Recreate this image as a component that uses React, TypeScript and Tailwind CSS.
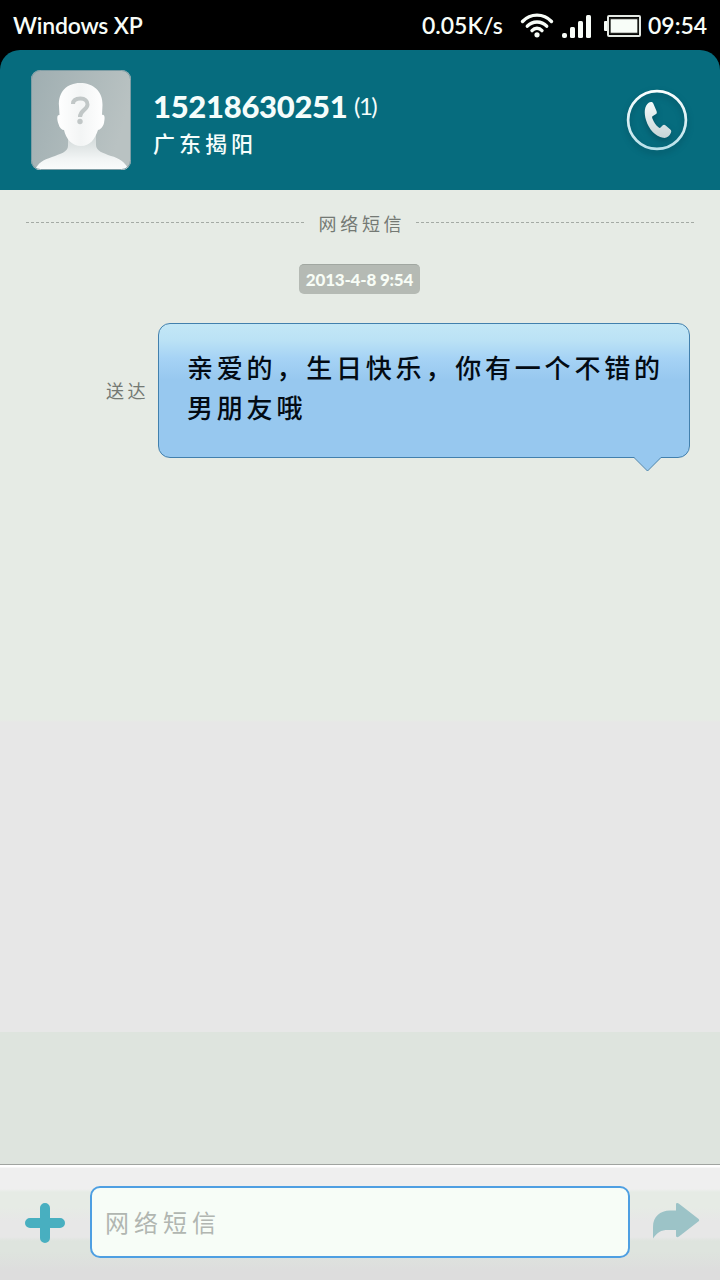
import type { ReactNode } from "react";

type Message = {
  id: number;
  lines: string[];
  status: string;
};

const messages: Message[] = [
  {
    id: 1,
    lines: ["亲爱的，生日快乐，你有一个不错的", "男朋友哦"],
    status: "送达",
  },
];

function WifiIcon() {
  return (
    <svg width="34" height="26" viewBox="0 0 34 26" fill="none" stroke="#f8fdf8" strokeWidth="3.4" strokeLinecap="round">
      <path d="M2.5 9.5C10.500 1 23.500 1 31.500 9.500" />
      <path d="M7.300 14.200C12.500 8.500 21.500 8.500 26.700 14.200" />
      <path d="M12 18.600C14.800 15.500 19.200 15.500 22 18.600" />
      <circle cx="17" cy="22.800" r="2.600" fill="#f8fdf8" stroke="none" />
    </svg>
  );
}

function SignalIcon() {
  return (
    <svg width="30" height="24" viewBox="0 0 30 24" fill="#f8fdf8">
      <rect x="0" y="18" width="5" height="5" rx="2" />
      <rect x="8" y="12" width="5" height="11" rx="1.500" />
      <rect x="16" y="6" width="5" height="17" rx="1.500" />
      <rect x="24" y="0" width="5" height="23" rx="1.500" />
    </svg>
  );
}

function BatteryIcon() {
  return (
    <svg width="37" height="22" viewBox="0 0 37 22">
      <rect x="0" y="6" width="5" height="10" rx="1" fill="#f8fdf8" />
      <rect x="4" y="1" width="32" height="20" rx="1" fill="none" stroke="#e4e9e4" strokeWidth="2" />
      <rect x="6" y="3.500" width="28" height="15" rx="1" fill="#f8fdf8" />
      <rect x="6" y="3.500" width="28" height="15" rx="1" fill="none" stroke="#20221f" strokeWidth="1.400" />
    </svg>
  );
}

function Avatar() {
  return (
    <svg className="block" width="100" height="100" viewBox="0 0 100 100">
      <defs>
        <linearGradient id="avatarBg" x1="0" y1="0" x2="1" y2="0.300">
          <stop offset="0" stopColor="#9faeb1" />
          <stop offset="1" stopColor="#b9c2c2" />
        </linearGradient>
        <linearGradient id="avatarBody" x1="0" y1="0" x2="0" y2="1">
          <stop offset="0" stopColor="#cdd5d5" />
          <stop offset="0.700" stopColor="#f2f5f5" />
          <stop offset="1" stopColor="#fafcfc" />
        </linearGradient>
        <linearGradient id="avatarFace" x1="0" y1="0" x2="1" y2="0">
          <stop offset="0" stopColor="#ffffff" />
          <stop offset="0.500" stopColor="#f3f5f5" />
          <stop offset="1" stopColor="#ffffff" />
        </linearGradient>
        <clipPath id="avatarClip">
          <rect width="100" height="100" rx="9" />
        </clipPath>
      </defs>
      <g clipPath="url(#avatarClip)">
        <rect width="100" height="100" fill="url(#avatarBg)" />
        <path d="M37 64V76C37 82 29 84 21 87C12 90 7 93 4 100H98C94 92 88 88 80 86C72 83 65 81 65 75V64Z" fill="url(#avatarBody)" />
        <path
          d="M49 13C36 13 27 22 28 36L28.500 45C25.500 44.500 26 50 27.500 54C28.500 58 31 60 33 60C35 69 41 76 50 76C59 76 64 69 67 60C69 60 72 57 73 53C74 48 74 44 71 45L71.500 35C72 21 62 13 49 13Z"
          fill="url(#avatarFace)"
        />
        <path d="M42 34C42 30 45 28.500 49.500 28.500C54 28.500 56.500 31 56.500 34.500C56.500 40 49 40 49 47" fill="none" stroke="#c1c7c7" strokeWidth="4" />
        <circle cx="49" cy="51.500" r="2.700" fill="#c1c7c7" />
      </g>
      <rect x="0.500" y="0.500" width="99" height="99" rx="9" fill="none" stroke="#7d9da5" />
    </svg>
  );
}

function CallIcon() {
  return (
    <svg className="drop-shadow-[0_3px_3px_rgba(0,40,55,0.35)]" width="62" height="62" viewBox="0 0 62 62">
      <defs>
        <linearGradient id="ring" x1="0" y1="0" x2="0" y2="1">
          <stop offset="0" stopColor="#fafefe" />
          <stop offset="1" stopColor="#b9e1ea" />
        </linearGradient>
        <linearGradient id="handset" x1="0" y1="0" x2="0" y2="1">
          <stop offset="0" stopColor="#f5fbfb" />
          <stop offset="1" stopColor="#c7d5d7" />
        </linearGradient>
      </defs>
      <circle cx="31" cy="31" r="28.900" fill="none" stroke="url(#ring)" strokeWidth="2.700" />
      <path
        d="M23 13.500C24.500 12.600 26.500 12.800 27.300 14.500L30.500 22C31 23.500 31 24.500 29.700 25.300L26.500 27.300C25.800 28 26.200 29 26.600 30C28 33.500 30 36.300 32.500 38.300C33.300 39 34 39.200 34.800 38.300L36.500 36.600C37.500 35.600 38.500 35.700 39.700 36.400L44.300 40.500C45.500 41.600 45.500 42.600 44.800 44C43.500 47.500 40.500 49.400 37 48.800C29.500 47.500 22.800 40.500 20 31C18 24 18 17 23 13.500Z"
        fill="url(#handset)"
      />
    </svg>
  );
}

function PlusIcon() {
  return (
    <svg width="40" height="40" viewBox="0 0 40 40" stroke="#48afc0" strokeWidth="10" strokeLinecap="round">
      <path d="M20 5V35M5 20H35" />
    </svg>
  );
}

function SendIcon() {
  return (
    <svg width="47" height="36" viewBox="0 0 47 36">
      <path
        d="M0 35.500V24C0 13.500 7 7.800 17 7.500H23V1.500C23 0 24.500 -0.300 26 0.700L45.300 15.700C46.500 16.600 46.500 17.700 45.300 18.600L26 33.500C24.500 34.600 23 34.300 23 32.800V27H15C8 27 4 29.500 0 35.500Z"
        fill="#9cc3c7"
      />
    </svg>
  );
}

function StatusBar() {
  return (
    <div className="flex h-[50px] items-center bg-black pr-3 pl-[13px] text-[23px] leading-none font-semibold whitespace-nowrap text-[#f8fdf8]">
      <span className="w-[409px] tracking-[-0.200px]">Windows XP</span>
      <span className="w-[98px]">0.05K/s</span>
      <span className="w-[42px]">
        <WifiIcon />
      </span>
      <span className="w-[42px] pt-1">
        <SignalIcon />
      </span>
      <span className="w-[44px] pt-0.5">
        <BatteryIcon />
      </span>
      <span>09:54</span>
    </div>
  );
}

function Header() {
  return (
    <div className="bg-black">
      <header className="flex h-[140px] rounded-t-[20px] bg-[#066c7e] pt-5 pl-[31px]">
        <Avatar />
        <div className="flex w-[475px] flex-col pt-[18px] pl-[22px] text-[#f5fdfb]">
          <div className="flex h-9 items-center leading-none">
            <h1 className="w-[201px] text-[31px] font-black tracking-[-0.300px]">15218630251</h1>
            <span className="text-[24px] tracking-[-1.500px]">(1)</span>
          </div>
          <p className="pt-px text-[22px] leading-[38px] font-medium tracking-[4px]">广东揭阳</p>
        </div>
        <button className="mt-[19px] ml-5 h-[62px] w-[62px]" aria-label="Call">
          <CallIcon />
        </button>
      </header>
    </div>
  );
}

function DashedLine() {
  return <div className="mb-0.5 h-px flex-1 bg-[repeating-linear-gradient(90deg,#a4aaa4_0_3px,transparent_3px_5px)]" />;
}

function Bubble({ children }: { children: ReactNode }) {
  return (
    <div className="relative h-[135px] w-[532px] rounded-[12px] border border-[#4280ad] bg-[linear-gradient(#c3e7f6_0px,#bbe2f5_16px,#a6d3f5_34px,#97c8ef_56px,#97c8ef_100%)] pt-6 pl-[28px]">
      {children}
      <svg className="absolute top-[132px] left-[474px]" width="30" height="16" viewBox="0 0 30 16">
        <path d="M0 0H30V1.500H28L14.500 14.500L1.500 1.500H0Z" fill="#97c8ef" />
        <path d="M0 1.500H1L14.500 15L28 1.500H30" fill="none" stroke="#4280ad" />
      </svg>
    </div>
  );
}

export default function App() {
  return (
    <main className="flex h-[1280px] w-[720px] flex-col overflow-hidden bg-[#e6ebe5] font-[Lato,'Noto_Sans_CJK_SC',sans-serif]">
      <StatusBar />
      <Header />

      <section className="flex h-[974px] flex-col items-center bg-[linear-gradient(#e6ebe5_0_530px,#e7e7e7_532px_842px,#dee4de_842px)]">
        <div className="mt-4 flex h-[34px] w-full items-center pr-[26px] pl-[26px]">
          <DashedLine />
          <span className="w-[111px] pt-0.5 pl-[14px] text-[18px] leading-[34px] tracking-[3.700px] text-[#747974]">网络短信</span>
          <DashedLine />
        </div>

        <div className="mt-6 mr-px h-[30px] w-[121px] rounded-[5px] border-t border-[#a1a7a1] bg-[#b5bab4] text-center text-[17px] leading-[29px] font-black tracking-[-0.200px] text-[#f8fdf6]">
          2013-4-8 9:54
        </div>

        {messages.map((message) => (
          <div key={message.id} className="mt-[29px] flex w-full items-center justify-end pr-[30px]">
            <span className="w-[52px] pt-0.5 text-[18px] tracking-[3.500px] text-[#747974]">{message.status}</span>
            <Bubble>
              {message.lines.map((line) => (
                <p key={line} className="text-[26px] leading-10 font-medium tracking-[3.800px] whitespace-nowrap text-[#030b14]">
                  {line}
                </p>
              ))}
            </Bubble>
          </div>
        ))}
      </section>

      <footer className="flex h-[116px] border-t border-[#a0a4a0] bg-[linear-gradient(#ffffff_0_2px,#efefef_3px_24px,#e6ebe5_27px_42px,#e7e7e7_56px_72px,#dee4de_76px_86px,#dddddd_106px)] pt-[21px]">
        <button className="mt-[17px] ml-[25px] h-10 w-10" aria-label="Add">
          <PlusIcon />
        </button>
        <input
          className="ml-[25px] h-[72px] w-[540px] rounded-[10px] border-2 border-[#4e9fe2] bg-[#f7fdf7] pl-[13px] text-[24px] tracking-[5px] outline-none placeholder:text-[#b1b6b1]"
          placeholder="网络短信"
        />
        <button className="mt-[17px] ml-[23px] h-9 w-[47px]" aria-label="Send">
          <SendIcon />
        </button>
      </footer>
    </main>
  );
}
